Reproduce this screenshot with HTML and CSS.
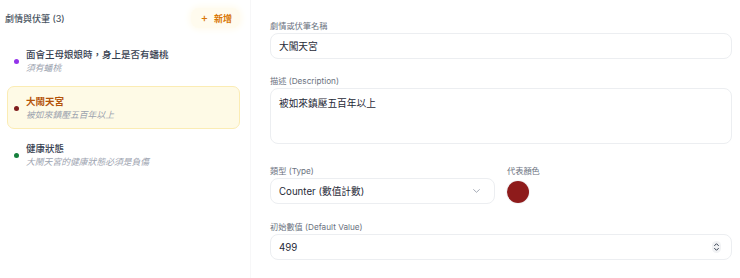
FILE: index.html
```html
<!DOCTYPE html>
<html lang="zh-Hant">
<head>
<meta charset="utf-8">
<link rel="stylesheet" href="styles.css">
</head>
<body>
<div class="app">
  <aside class="sidebar">
    <div class="sidebar-head">
      <span class="sidebar-title">劇情與伏筆 (3)</span>
      <button class="add-btn"><span class="plus">+</span>新增</button>
    </div>
    <ul class="plot-list">
      <li class="plot-item">
        <span class="dot dot-purple"></span>
        <div class="plot-text">
          <div class="plot-title">面會王母娘娘時，身上是否有蟠桃</div>
          <div class="plot-sub">須有蟠桃</div>
        </div>
      </li>
      <li class="plot-item is-active">
        <span class="dot dot-red"></span>
        <div class="plot-text">
          <div class="plot-title">大鬧天宮</div>
          <div class="plot-sub">被如來鎮壓五百年以上</div>
        </div>
      </li>
      <li class="plot-item">
        <span class="dot dot-green"></span>
        <div class="plot-text">
          <div class="plot-title">健康狀態</div>
          <div class="plot-sub">大鬧天宮的健康狀態必須是負傷</div>
        </div>
      </li>
    </ul>
  </aside>
  <main class="editor">
    <div class="field">
      <label class="label">劇情或伏筆名稱</label>
      <div class="control"><span class="value">大闖天宮</span></div>
    </div>
    <div class="field field-desc">
      <label class="label">描述 (Description)</label>
      <div class="control control-area"><span class="value">被如來鎮壓五百年以上</span></div>
    </div>
    <div class="field-row">
      <div class="field">
        <label class="label">類型 (Type)</label>
        <div class="control control-select">
          <span class="value">Counter (數值計數)</span>
          <svg class="chev" width="7" height="4" viewBox="0 0 7 4"><path d="M0.6 0.6 L3.5 3.3 L6.4 0.6" fill="none" stroke="#9ca3af" stroke-width="0.9" stroke-linecap="round" stroke-linejoin="round"/></svg>
        </div>
      </div>
      <div class="field">
        <label class="label">代表顏色</label>
        <span class="swatch"></span>
      </div>
    </div>
    <div class="field">
      <label class="label">初始數值 (Default Value)</label>
      <div class="control control-select">
        <span class="value">499</span>
        <svg class="spin" width="9" height="12" viewBox="0 0 9 12"><rect x="0" y="0" width="9" height="12" rx="4.5" fill="#f1f2f4"/><path d="M2.6 4.6 L4.5 2.7 L6.4 4.6" fill="none" stroke="#374151" stroke-width="1" stroke-linecap="round" stroke-linejoin="round"/><path d="M2.6 7.4 L4.5 9.3 L6.4 7.4" fill="none" stroke="#374151" stroke-width="1" stroke-linecap="round" stroke-linejoin="round"/></svg>
      </div>
    </div>
  </main>
</div>
</body>
</html>
```

FILE: styles.css
```css
* { box-sizing: border-box; }
html, body { margin: 0; padding: 0; background: #ffffff; }
body {
  font-family: "Inter", "Noto Sans CJK TC", sans-serif;
  color: #1f2937;
  width: 740px;
  height: 278px;
  overflow: hidden;
}
.app {
  display: flex;
  height: 278px;
}
.sidebar {
  width: 251px;
  flex: none;
  padding: 8px 10px 0 5px;
  border-right: 1px solid #f7f7f8;
}
.sidebar-head {
  display: flex;
  align-items: center;
  justify-content: space-between;
  height: 20px;
}
.sidebar-title {
  font-size: 9px;
  font-weight: 500;
  color: #4b5563;
}
.add-btn {
  font-family: inherit;
  border: none;
  background: #fffbee;
  box-shadow: 0 0 6px 2px #fffbee;
  border-radius: 8px;
  height: 20px;
  padding: 0 8px 0 10px;
  color: #d97706;
  font-size: 9px;
  font-weight: 600;
  display: flex;
  align-items: center;
  gap: 6px;
}
.plus { font-size: 11px; font-weight: 500; }
.plot-list {
  list-style: none;
  margin: 11px 0 0 2px;
  padding: 0;
  display: flex;
  flex-direction: column;
  gap: 4px;
}
.plot-item {
  display: flex;
  align-items: center;
  gap: 7px;
  height: 43px;
  padding: 0 6px;
  border: 1px solid transparent;
  border-radius: 7px;
}
.plot-item.is-active {
  background: #fefae6;
  border-color: #fbecb4;
}
.dot {
  width: 5px;
  height: 5px;
  border-radius: 50%;
  flex: none;
  margin-top: 1px;
}
.dot-purple { background: #9333ea; }
.dot-red { background: #7f1d1d; }
.dot-green { background: #15803d; }
.plot-text { display: flex; flex-direction: column; gap: 1px; }
.plot-title {
  font-size: 9.5px;
  line-height: 13px;
  font-weight: 500;
  color: #374151;
}
.is-active .plot-title { color: #b45309; font-weight: 700; }
.plot-sub {
  font-size: 8.8px;
  line-height: 12px;
  font-style: italic;
  color: #9ca3af;
}
.editor {
  flex: 1;
  padding: 20px 8px 0 19px;
}
.label {
  display: block;
  font-size: 8.2px;
  line-height: 12px;
  color: #6b7280;
  margin-bottom: 1px;
}
.field { margin-bottom: 16px; }
.field-desc { margin-bottom: 21px; }
.control {
  height: 26px;
  border: 1px solid #eceef1;
  border-radius: 8px;
  display: flex;
  align-items: center;
  padding: 0 10px 0 8px;
  font-size: 9.7px;
  color: #1f2937;
}
.control-area {
  height: 56px;
  align-items: flex-start;
  padding-top: 7px;
}
.control-select { justify-content: space-between; }
.chev { margin-right: 4px; }
.spin { margin-right: 0; }
.field-row {
  display: grid;
  grid-template-columns: 1fr 1fr;
  gap: 12px;
}
.field-row .field { margin-bottom: 17px; }
.swatch {
  display: block;
  width: 22px;
  height: 22px;
  border-radius: 50%;
  background: #8e1b1b;
  margin-top: 4px;
  box-shadow: 0 0 0 1px #f3f4f6;
}
```
